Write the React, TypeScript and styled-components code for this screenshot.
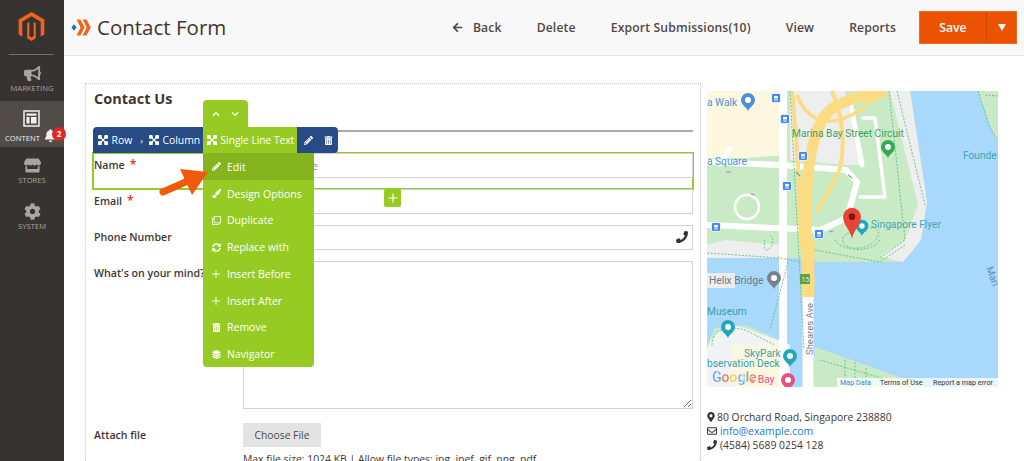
import React from 'react';
import styled, { createGlobalStyle } from 'styled-components';
import {
  FaArrowLeft, FaBell, FaBullhorn, FaCog, FaLayerGroup, FaMapMarkerAlt, FaPaintBrush,
  FaPencilAlt, FaPhone, FaRegClone, FaRegEnvelope, FaStore, FaSyncAlt, FaTrashAlt,
  FaChevronUp, FaChevronDown,
} from 'react-icons/fa';
import { Plus } from 'lucide-react';

const Global = createGlobalStyle`
  html, body { margin: 0; padding: 0; height: 100%; overflow: hidden; background: #fff; }
  #root { height: 100%; }
  * { box-sizing: border-box; }
  body { font-family: "Open Sans", "Liberation Sans", sans-serif; color: #41362f; }
`;

const Shell = styled.div`display: flex; height: 461px; overflow: hidden;`;

const Sidebar = styled.aside`
  width: 64px; flex: none; background: #373330; display: flex; flex-direction: column;
`;
const LogoCell = styled.div`
  height: 55px; margin: 0 10px 0 9px; border-bottom: 1px solid #736d68;
  display: flex; justify-content: center; padding-top: 12px;
`;
const NavItem = styled.div<{ $active?: boolean }>`
  position: relative; height: 46px;
  background: ${p => (p.$active ? '#514c48' : 'transparent')};
  color: ${p => (p.$active ? '#f2f0ee' : '#a8a4a0')};
  display: flex; flex-direction: column; align-items: ${p => (p.$active ? 'flex-start' : 'center')};
  padding-top: ${p => (p.$active ? 8 : 9)}px;
  font-size: 7.6px; line-height: 10px; letter-spacing: .05px;
`;
const NavIconSlot = styled.div<{ $active?: boolean }>`
  height: 18px; display: flex; align-items: center; justify-content: center;
  width: ${p => (p.$active ? '62px' : 'auto')}; margin-bottom: ${p => (p.$active ? 6 : 1)}px;
  font-size: 17px;
`;
const NavLabel = styled.span<{ $active?: boolean }>`
  margin-left: ${p => (p.$active ? 5 : 0)}px;
`;
const BellWrap = styled.div`
  position: absolute; left: 44px; top: 28px; color: #f2f0ee; font-size: 13px; line-height: 13px;
`;
const Badge = styled.span`
  position: absolute; left: 8px; top: -2px; width: 14px; height: 14px; border-radius: 50%;
  background: #e22626; color: #fff; font-size: 8px; font-weight: 700; line-height: 14px; text-align: center;
`;

const Main = styled.main`flex: 1; min-width: 0; display: flex; flex-direction: column;`;
const Header = styled.header`
  height: 56px; flex: none; background: #f8f8f8; border-bottom: 1px solid #e6e6e6;
  display: flex; align-items: center; padding: 0 7px 1px 7px;
`;
const Title = styled.h1`
  margin: 0 0 0 6px; font-size: 20.5px; font-weight: 400; color: #41362f; line-height: 30px;
`;
const Actions = styled.nav`margin-left: auto; display: flex; align-items: center;`;
const ActionLink = styled.span`
  display: inline-flex; align-items: center; gap: 10px; margin-right: 35px;
  font-size: 12.2px; font-weight: 600; color: #514943; white-space: nowrap; letter-spacing: .14px;
  &:nth-last-child(2) { margin-right: 23px; }
`;
const SaveGroup = styled.div`
  display: flex; height: 33px; width: 98px; background: #eb5202; color: #fff; border: 1px solid #f26a22;
`;
const SaveMain = styled.span`
  flex: 1; display: flex; align-items: center; justify-content: center;
  font-size: 12.2px; font-weight: 600; border-right: 1px solid #c94700;
`;
const SaveCaret = styled.span`
  width: 29px; display: flex; align-items: center; justify-content: center;
  &::before { content: ''; border: 4.5px solid transparent; border-top: 7px solid #fff; border-bottom: 0; }
`;

const Body = styled.div`
  flex: 1; display: flex; align-items: flex-start; padding: 27px 0 0 21px; min-height: 0;
`;
const FormBox = styled.section`
  position: relative; width: 616px; height: 500px; flex: none;
  border: 1px dotted #c9c9c9; border-bottom: 0; padding: 5px 7px 0 8px;
`;
const Heading = styled.h2`margin: 0; font-size: 14.5px; font-weight: 700; line-height: 20px; color: #41362f;`;
const Rule = styled.div`height: 2px; background: #a8a8a8; margin: 21px 0 21px 0;`;
const Field = styled.div<{ $gap?: number }>`
  position: relative; display: grid; grid-template-columns: 149px 1fr; margin-bottom: ${p => p.$gap ?? 11}px;
`;
const Label = styled.label`
  font-size: 10.6px; font-weight: 600; color: #41362f; line-height: 24px; white-space: nowrap;
`;
const Star = styled.span`color: #e22626; margin-left: 5px; font-size: 12px;`;
const InputWrap = styled.div`position: relative; z-index: 1;`;
const TextInput = styled.input`
  display: block; width: 100%; height: 25px; border: 1.5px solid #d2d2d2;
  background: #fff; padding: 0 10px; font: 11.5px "Open Sans", sans-serif; outline: none;
  &::placeholder { color: #8a8a8a; opacity: 1; }
`;
const InputIcon = styled.span`
  position: absolute; right: 5px; top: 6px; font-size: 12px; line-height: 12px; color: #333;
`;
const TextArea = styled.textarea`
  display: block; width: 100%; height: 148px; border: 1.5px solid #d2d2d2; background: #fff; outline: none;
`;
const FileButton = styled.button`
  display: block; width: 78px; height: 24px; border: 0; background: #e3e3e3; color: #514943; padding: 0;
  font: 10.3px "Open Sans", sans-serif;
`;
const Note = styled.p`margin: 4px 0 0; font-size: 10.4px; line-height: 16px; color: #41362f; white-space: nowrap;`;

const Highlight = styled.div`
  position: absolute; left: -2px; right: -1px; top: -1px; height: 38px; border: 2px solid #96cb24;
`;
const AddButton = styled.span`
  position: absolute; left: 290px; top: 36px; width: 17px; height: 18px; border-radius: 2px; z-index: 2;
  background: #96cb24; color: #fff; display: flex; align-items: center; justify-content: center;
`;

const BlueBar = styled.div`
  position: absolute; left: 7px; top: 43px; width: 245px; height: 26px; z-index: 5;
  background: #274b84; border-radius: 4px 4px 4px 0; color: #fff; display: flex; align-items: center;
  font-size: 10.4px; padding-left: 5px;
`;
const Crumb = styled.span`display: inline-flex; align-items: center; gap: 3.5px; white-space: nowrap;`;
const Sep = styled.span`margin: 0 6px 0 8px; font-size: 9px; line-height: 9px;`;
const GreenCrumb = styled.span`
  position: absolute; left: 110px; top: 0; width: 94px; height: 26px; background: #96cb24; font-size: 10.2px;
  display: inline-flex; align-items: center; gap: 3.5px; padding-left: 4px; white-space: nowrap;
`;
const BarTools = styled.span`
  position: absolute; right: 5px; top: 0; height: 26px; display: flex; align-items: center; gap: 11px; font-size: 9px;
`;
const MoveTab = styled.div`
  position: absolute; left: 117px; top: 16px; width: 45px; height: 28px; z-index: 6;
  background: #96cb24; border-radius: 4px 4px 0 0; color: #fff; display: flex; align-items: center;
  justify-content: space-around; padding: 0 3px; font-size: 8px;
`;
const Menu = styled.ul`
  position: absolute; left: 117px; top: 69px; width: 111px; margin: 0; padding: 0; list-style: none; z-index: 6;
  background: #96cb24; border-radius: 0 0 4px 4px; color: #fff; height: 214px;
`;
const MenuRow = styled.li<{ $on?: boolean }>`
  height: 26.75px; display: flex; align-items: center; font-size: 10.5px; padding-top: 1px;
  background: ${p => (p.$on ? '#85b41f' : 'transparent')}; white-space: nowrap;
`;
const MenuIcon = styled.span`width: 24px; display: flex; justify-content: center; padding-left: 2px; font-size: 9px;`;
const Arrow = styled.svg`position: absolute; left: 72px; top: 82px; z-index: 7;`;

const Aside = styled.aside`width: 291px; margin: 8px 0 0 6px; flex: none;`;
const MapFrame = styled.div`height: 296px; overflow: hidden; line-height: 0;`;
const Contact = styled.div`margin-top: 23px; font-size: 10.4px; line-height: 14px; color: #41362f;`;
const ContactRow = styled.div`display: flex; align-items: center; gap: 3px; white-space: nowrap;`;
const ContactIcon = styled.span<{ $narrow?: boolean }>`
  display: inline-flex; justify-content: center; font-size: 10px; color: #333;
  width: ${p => (p.$narrow ? 7 : 10)}px; overflow: visible;
  & > svg { flex: none; }
`;
const Mail = styled.span`color: #1979c3;`;

const MoveIcon = () => (
  <svg width="10" height="10" viewBox="0 0 16 16" fill="currentColor" style={{ flex: 'none' }}>
    <rect x="0" y="0" width="6" height="6" rx="1.4" />
    <rect x="10" y="0" width="6" height="6" rx="1.4" />
    <rect x="0" y="10" width="6" height="6" rx="1.4" />
    <rect x="10" y="10" width="6" height="6" rx="1.4" />
    <path d="M3 3l10 10M13 3L3 13" stroke="currentColor" strokeWidth="2.2" />
  </svg>
);

const MagentoLogo = () => (
  <svg width="27" height="30" viewBox="0 0 24 28" fill="#f26322">
    <path d="M12 0L24 7V21L20.6 23V9L12 4L3.4 9V23L0 21V7Z" />
    <path d="M8 10.2L10 9V22.5L12 23.7L14 22.5V9L16 10.2V24.6L12 27L8 24.6Z" />
  </svg>
);

const FormIcon = () => (
  <svg width="20" height="17" viewBox="0 0 20 17" style={{ flex: 'none' }}>
    <path d="M3 5.2L5.6 8.5L3 11.8L0.4 8.5Z" fill="#1f6fc0" />
    <path d="M5.6 0.5H9.4L13.6 8.5L9.4 16.5H5.6L9.6 8.5Z" fill="#f26322" />
    <path d="M11.6 0.5H15.4L19.8 8.5L15.4 16.5H11.6L15.6 8.5Z" fill="#f26322" />
  </svg>
);

const ContentIcon = () => (
  <svg width="17" height="17" viewBox="0 0 17 17" fill="none" stroke="currentColor">
    <rect x="1" y="1" width="15" height="15" strokeWidth="1.5" />
    <rect x="3.5" y="3.5" width="10" height="2.2" fill="currentColor" stroke="none" />
    <rect x="3.5" y="7" width="3" height="6.5" fill="currentColor" stroke="none" />
    <rect x="8" y="7" width="5.5" height="6.5" fill="currentColor" stroke="none" />
  </svg>
);

const Pin = ({ x, y, c, s = 1, icon = '#fff' }: { x: number; y: number; c: string; s?: number; icon?: string }) => (
  <g transform={`translate(${x} ${y}) scale(${s})`}>
    <path d="M0 11C-1.5 7-7 5-7 0A7 7 0 0 1 7 0C7 5 1.5 7 0 11Z" fill={c} />
    <circle r="3" fill={icon} />
  </g>
);

const Bus = ({ x, y }: { x: number; y: number }) => (
  <g transform={`translate(${x - 4.5} ${y - 4.5})`}>
    <rect width="9" height="9" rx="1.5" fill="#4285f4" stroke="#fff" strokeWidth=".8" />
    <rect x="2.6" y="2.4" width="3.8" height="2.6" fill="#fff" />
    <rect x="2.6" y="6" width="3.8" height="1" fill="#fff" />
  </g>
);

const MapArt = () => (
  <svg width="291" height="296" viewBox="707 91 291 296" fontFamily="Roboto, 'Liberation Sans', sans-serif">
    <rect x="707" y="91" width="291" height="296" fill="#c8ebc6" />
    <path d="M910 91H978L990 125L998 142V387H908L815 347L815 262L903 262L921 240L927 202Z" fill="#a8d8fc" />
    <path d="M707 258H815V347L813 387H780V340L745 325L715 328L707 345Z" fill="#a8d8fc" />
    <path d="M890 91H910L927 202L921 240L903 262L880 256L905 240L918 205Z" fill="#eeeeee" />
    <path d="M790 91H845L860 165L846 165L790 160Z" fill="#eeeeee" />
    <path d="M707 273H735V288H707Z" fill="#eceded" />
    <path d="M707 350C712 332 725 322 745 328L790 345V387H707Z" fill="#f1f3f4" />
    <path d="M733 345H780V387H737C730 370 730 355 733 345Z" fill="#fdf7df" />
    <path d="M707 91H783V155L745 158L707 158Z" fill="#fdf7df" />
    <path d="M815 347L908 380L925 387H815Z" fill="#c8ebc6" />
    <path d="M725 240L780 245L778 258L707 258V245Z" fill="#eeeeee" />
    <g fill="none" stroke="#fff" strokeLinejoin="round" strokeLinecap="round">
      <path d="M707 162L780 165L846 170L857 182L847 218L820 230L707 225" strokeWidth="6" />
      <path d="M783 91V387" strokeWidth="8" />
      <path d="M863 118H875L885 197H860" strokeWidth="3.5" />
      <path d="M850 100L862 165" strokeWidth="5" />
      <circle cx="747" cy="207" r="12" strokeWidth="2.6" />
      <path d="M720 165L730 148" strokeWidth="4" />
      <path d="M808 245V387" strokeWidth="11" />
    </g>
    <g fill="none" stroke="#fbdc82" strokeLinecap="butt">
      <path d="M792 91C796 130 800 190 801 248" strokeWidth="4" />
      <path d="M797 95C806 118 822 124 838 120C855 116 870 104 885 91" strokeWidth="3.5" />
      <path d="M832 91C842 115 846 140 840 168C836 182 824 195 817 212" strokeWidth="4" />
      <path d="M806 250C806 190 806 150 823 118C833 102 860 96 886 91" strokeWidth="11" />
      <path d="M808 240V297" strokeWidth="13" />
    </g>
    <g fill="none" stroke="#6cc48c" strokeWidth="1" strokeDasharray="2 1.5">
      <path d="M889 91L905 240L880 258" />
      <path d="M897 91L925 205" />
      <path d="M707 253L780 258L800 262" />
      <path d="M815 250L880 262L905 245" />
      <path d="M835 240C840 250 870 255 880 240" />
      <path d="M790 91L804 350" />
      <path d="M788 262L770 330" />
      <path d="M712 345C712 330 725 325 745 330L775 345" />
      <path d="M978 91L990 128L998 140" />
      <path d="M985 95L998 96" />
      <path d="M820 360L905 385" />
      <path d="M845 360V387M855 362V387M866 368V387" />
      <path d="M870 228C885 225 880 245 860 248C840 250 838 235 850 233" />
      <path d="M770 235C780 245 760 260 765 240" />
    </g>
    <Bus x={776} y={98} /><Bus x={785} y={119} /><Bus x={803} y={156} />
    <Bus x={787} y={186} /><Bus x={716} y={227} /><Bus x={819} y={234} />
    <path d="M726 172h5M796 172l4 4M848 175l4 3M751 194l4 1M833 231l-4 1" stroke="#8c93b8" strokeWidth="1.2" />
    <g fontSize="10.2">
      <text x="707" y="106" fill="#4b8fe0">a Walk</text>
      <text x="792" y="137" fill="#3f9d63">Marina Bay Street Circuit</text>
      <text x="707" y="165" fill="#4b8fe0">a Square</text>
      <text x="963" y="159" fill="#4aa3ac">Founde</text>
      <text x="871" y="228" fill="#4aa3ac">Singapore Flyer</text>
      <text x="709" y="284" fill="#6d7a85">Helix Bridge</text>
      <text x="707" y="315" fill="#35a0ac">Museum</text>
      <text x="744" y="357" fill="#35a0ac">SkyPark</text>
      <text x="707" y="367" fill="#35a0ac">bservation Deck</text>
      <text x="750" y="383" fill="#ea4f82">s Bay</text>
      <text transform="translate(813 355) rotate(-90)" fontSize="9.5" fill="#7a7a7a">Sheares Ave</text>
      <text transform="translate(986 268) rotate(70)" fontSize="10" fill="#5b8fd0">Mari</text>
    </g>
    <Pin x={748} y={100} c="#4b8fe0" />
    <Pin x={888} y={147} c="#34a853" />
    <Pin x={862} y={226} c="#1ea7bd" s={.9} />
    <Pin x={774} y={278} c="#76828e" />
    <Pin x={728} y={327} c="#1ea7bd" />
    <Pin x={790} y={356} c="#1ea7bd" />
    <Pin x={788} y={380} c="#ea4f82" />
    <g transform="translate(852 218) scale(1.28)">
      <path d="M0 16C-1.5 9-7 5-7 -1A7 7 0 0 1 7 -1C7 5 1.5 9 0 16Z" fill="#ea4335" />
      <circle cy="-1" r="2.5" fill="#7a1510" />
    </g>
    <rect x="800" y="274" width="10" height="10" rx="1" fill="#5f9e45" />
    <text x="801.5" y="282" fontSize="7" fill="#e8f5e0">15</text>
    <g fontSize="14" fontWeight="500" stroke="#fff" strokeWidth=".4">
      <text x="712" y="382"><tspan fill="#4285f4">G</tspan><tspan fill="#ea4335">o</tspan><tspan fill="#fbbc05">o</tspan><tspan fill="#4285f4">g</tspan><tspan fill="#34a853">l</tspan><tspan fill="#ea4335">e</tspan></text>
    </g>
    <rect x="837" y="378" width="161" height="9" fill="#fff" fillOpacity=".75" />
    <g fontSize="7.2">
      <text x="840" y="385" fill="#3a86d8">Map Data</text>
      <text x="880" y="385" fill="#333">Terms of Use</text>
      <text x="933" y="385" fill="#333">Report a map error</text>
    </g>
  </svg>
);

const menu: [React.ReactNode, string][] = [
  [<FaPencilAlt />, 'Edit'],
  [<FaPaintBrush />, 'Design Options'],
  [<FaRegClone />, 'Duplicate'],
  [<FaSyncAlt />, 'Replace with'],
  [<Plus size={12} strokeWidth={1.8} />, 'Insert Before'],
  [<Plus size={12} strokeWidth={1.8} />, 'Insert After'],
  [<FaTrashAlt />, 'Remove'],
  [<FaLayerGroup />, 'Navigator'],
];

export default function App() {
  return (
    <Shell>
      <Global />
      <Sidebar>
        <LogoCell><MagentoLogo /></LogoCell>
        <NavItem><NavIconSlot><FaBullhorn /></NavIconSlot><NavLabel>MARKETING</NavLabel></NavItem>
        <NavItem $active>
          <NavIconSlot $active><ContentIcon /></NavIconSlot>
          <NavLabel $active>CONTENT</NavLabel>
          <BellWrap><FaBell /><Badge>2</Badge></BellWrap>
        </NavItem>
        <NavItem><NavIconSlot><FaStore /></NavIconSlot><NavLabel>STORES</NavLabel></NavItem>
        <NavItem><NavIconSlot><FaCog /></NavIconSlot><NavLabel>SYSTEM</NavLabel></NavItem>
      </Sidebar>
      <Main>
        <Header>
          <FormIcon />
          <Title>Contact Form</Title>
          <Actions>
            <ActionLink><FaArrowLeft size={11} />Back</ActionLink>
            <ActionLink>Delete</ActionLink>
            <ActionLink>Export Submissions(10)</ActionLink>
            <ActionLink>View</ActionLink>
            <ActionLink>Reports</ActionLink>
            <SaveGroup><SaveMain>Save</SaveMain><SaveCaret /></SaveGroup>
          </Actions>
        </Header>
        <Body>
          <FormBox>
            <Heading>Contact Us</Heading>
            <Rule />
            <Field>
              <Highlight />
              <Label>Name<Star>*</Star></Label>
              <InputWrap><TextInput readOnly placeholder="Enter Name" /></InputWrap>
              <AddButton><Plus size={14} strokeWidth={2} /></AddButton>
            </Field>
            <Field>
              <Label>Email<Star>*</Star></Label>
              <InputWrap><TextInput readOnly /></InputWrap>
            </Field>
            <Field>
              <Label>Phone Number</Label>
              <InputWrap><TextInput readOnly /><InputIcon><FaPhone /></InputIcon></InputWrap>
            </Field>
            <Field $gap={14}>
              <Label>What's on your mind?</Label>
              <InputWrap><TextArea readOnly /></InputWrap>
            </Field>
            <Field>
              <Label>Attach file</Label>
              <InputWrap>
                <FileButton type="button">Choose File</FileButton>
                <Note>Max file size: 1024 KB | Allow file types: jpg, jpef, gif, png, pdf</Note>
              </InputWrap>
            </Field>

            <MoveTab><FaChevronUp /><FaChevronDown /></MoveTab>
            <BlueBar>
              <Crumb><MoveIcon />Row</Crumb>
              <Sep>›</Sep>
              <Crumb><MoveIcon />Column</Crumb>
              <GreenCrumb><MoveIcon />Single Line Text</GreenCrumb>
              <BarTools><FaPencilAlt /><FaTrashAlt /></BarTools>
            </BlueBar>
            <Menu>
              {menu.map(([icon, label], i) => (
                <MenuRow key={label} $on={i === 0}><MenuIcon>{icon}</MenuIcon>{label}</MenuRow>
              ))}
            </Menu>
            <Arrow width="52" height="32" viewBox="0 0 52 32">
              <path d="M5 26L32 14" stroke="#f15a0a" strokeWidth="7" strokeLinecap="round" />
              <path d="M22 3L50 6L34 29Z" fill="#f15a0a" />
            </Arrow>
          </FormBox>
          <Aside>
            <MapFrame><MapArt /></MapFrame>
            <Contact>
              <ContactRow><ContactIcon $narrow><FaMapMarkerAlt /></ContactIcon>80 Orchard Road, Singapore 238880</ContactRow>
              <ContactRow><ContactIcon><FaRegEnvelope /></ContactIcon><Mail>info@example.com</Mail></ContactRow>
              <ContactRow><ContactIcon><FaPhone /></ContactIcon>(4584) 5689 0254 128</ContactRow>
            </Contact>
          </Aside>
        </Body>
      </Main>
    </Shell>
  );
}
